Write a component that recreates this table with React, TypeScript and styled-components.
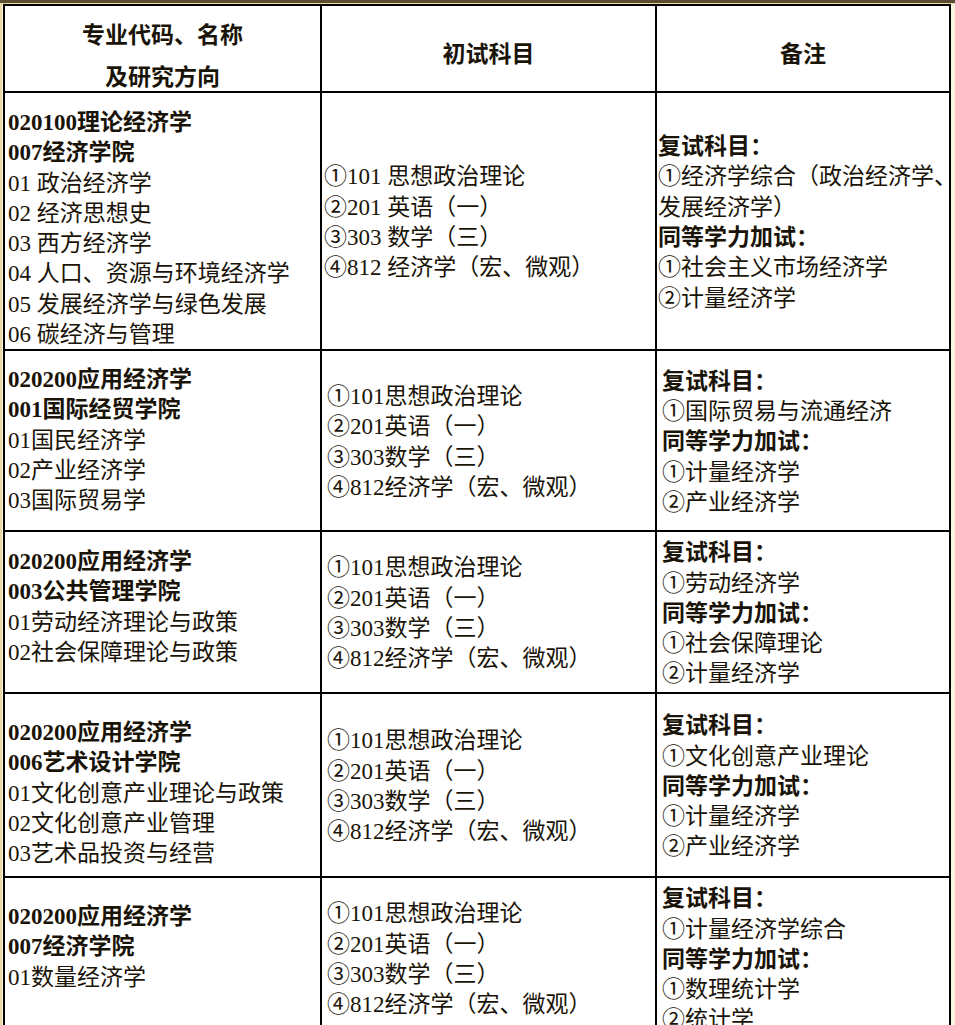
import styled, { createGlobalStyle } from "styled-components";

const GlobalStyle = createGlobalStyle`
  html, body {
    margin: 0;
    padding: 0;
    background: #fbf6e2;
  }
  body {
    font-family: "Liberation Serif", "Noto Sans CJK SC", serif;
    color: #1a1408;
  }
`;

const TopBar = styled.div`
  height: 3px;
  background: #5a4b31;
  border-bottom: 1px solid #e9dca2;
`;

const Page = styled.div`
  padding-left: 3px;
  border-left: 2px solid #e6d9a6;
`;

const Grid = styled.div`
  display: grid;
  grid-template-columns: 315px 333px 292px;
  grid-template-rows: 85px 256px 179px 160px 182px 160px;
  gap: 2px;
  padding: 2px;
  width: 944px;
  background: #000;
  margin-left: -2px;
`;

const Cell = styled.div<{ $pad?: number; $left?: number; $top?: boolean }>`
  background: #fff;
  display: flex;
  flex-direction: column;
  justify-content: ${(p) => (p.$top ? "flex-start" : "center")};
  padding-top: ${(p) => p.$pad ?? 4}px;
  padding-left: ${(p) => p.$left ?? 4}px;
  font-size: 23px;
  line-height: 30.3px;
  white-space: nowrap;
`;

const HeadCell = styled(Cell)`
  align-items: center;
  padding-left: 0;
  font-weight: 700;
  line-height: 42px;
`;

const Line = styled.div<{ $bold?: boolean }>`
  font-weight: ${(p) => (p.$bold ? 700 : 400)};
`;

type Block = { text: string; bold?: boolean }[];

const exam = (spaced: boolean): Block =>
  [
    "①101" + (spaced ? " " : "") + "思想政治理论",
    "②201" + (spaced ? " " : "") + "英语（一）",
    "③303" + (spaced ? " " : "") + "数学（三）",
    "④812" + (spaced ? " " : "") + "经济学（宏、微观）",
  ].map((text) => ({ text }));

type Row = {
  major: Block;
  majorPad: number;
  exam: Block;
  note: Block;
  first?: boolean;
};

const rows: Row[] = [
  {
    major: [
      { text: "020100理论经济学", bold: true },
      { text: "007经济学院", bold: true },
      { text: "01 政治经济学" },
      { text: "02 经济思想史" },
      { text: "03 西方经济学" },
      { text: "04 人口、资源与环境经济学" },
      { text: "05 发展经济学与绿色发展" },
      { text: "06 碳经济与管理" },
    ],
    majorPad: 15,
    exam: exam(true),
    note: [
      { text: "复试科目：", bold: true },
      { text: "①经济学综合（政治经济学、" },
      { text: "发展经济学）" },
      { text: "同等学力加试：", bold: true },
      { text: "①社会主义市场经济学" },
      { text: "②计量经济学" },
    ],
    first: true,
  },
  {
    major: [
      { text: "020200应用经济学", bold: true },
      { text: "001国际经贸学院", bold: true },
      { text: "01国民经济学" },
      { text: "02产业经济学" },
      { text: "03国际贸易学" },
    ],
    majorPad: 14,
    exam: exam(false),
    note: [
      { text: "复试科目：", bold: true },
      { text: "①国际贸易与流通经济" },
      { text: "同等学力加试：", bold: true },
      { text: "①计量经济学" },
      { text: "②产业经济学" },
    ],
  },
  {
    major: [
      { text: "020200应用经济学", bold: true },
      { text: "003公共管理学院", bold: true },
      { text: "01劳动经济理论与政策" },
      { text: "02社会保障理论与政策" },
    ],
    majorPad: 15,
    exam: exam(false),
    note: [
      { text: "复试科目：", bold: true },
      { text: "①劳动经济学" },
      { text: "同等学力加试：", bold: true },
      { text: "①社会保障理论" },
      { text: "②计量经济学" },
    ],
  },
  {
    major: [
      { text: "020200应用经济学", bold: true },
      { text: "006艺术设计学院", bold: true },
      { text: "01文化创意产业理论与政策" },
      { text: "02文化创意产业管理" },
      { text: "03艺术品投资与经营" },
    ],
    majorPad: 24,
    exam: exam(false),
    note: [
      { text: "复试科目：", bold: true },
      { text: "①文化创意产业理论" },
      { text: "同等学力加试：", bold: true },
      { text: "①计量经济学" },
      { text: "②产业经济学" },
    ],
  },
  {
    major: [
      { text: "020200应用经济学", bold: true },
      { text: "007经济学院", bold: true },
      { text: "01数量经济学" },
    ],
    majorPad: 24,
    exam: exam(false),
    note: [
      { text: "复试科目：", bold: true },
      { text: "①计量经济学综合" },
      { text: "同等学力加试：", bold: true },
      { text: "①数理统计学" },
      { text: "②统计学" },
    ],
  },
];

const renderBlock = (b: Block) =>
  b.map((l, i) => (
    <Line key={i} $bold={l.bold}>
      {l.text}
    </Line>
  ));

export default function App() {
  return (
    <>
      <GlobalStyle />
      <TopBar />
      <Page>
        <Grid>
          <HeadCell $pad={16}>
            <div>专业代码、名称</div>
            <div>及研究方向</div>
          </HeadCell>
          <HeadCell $pad={12}>
            <div>初试科目</div>
          </HeadCell>
          <HeadCell $pad={12}>
            <div>备注</div>
          </HeadCell>
          {rows.map((r, i) => [
            <Cell key={`m${i}`} $top $pad={r.majorPad} $left={3}>
              {renderBlock(r.major)}
            </Cell>,
            <Cell key={`e${i}`} $left={r.first ? 2 : 5}>
              {renderBlock(r.exam)}
            </Cell>,
            <Cell key={`n${i}`} $left={r.first ? 1 : 5}>
              {renderBlock(r.note)}
            </Cell>,
          ])}
        </Grid>
      </Page>
    </>
  );
}
